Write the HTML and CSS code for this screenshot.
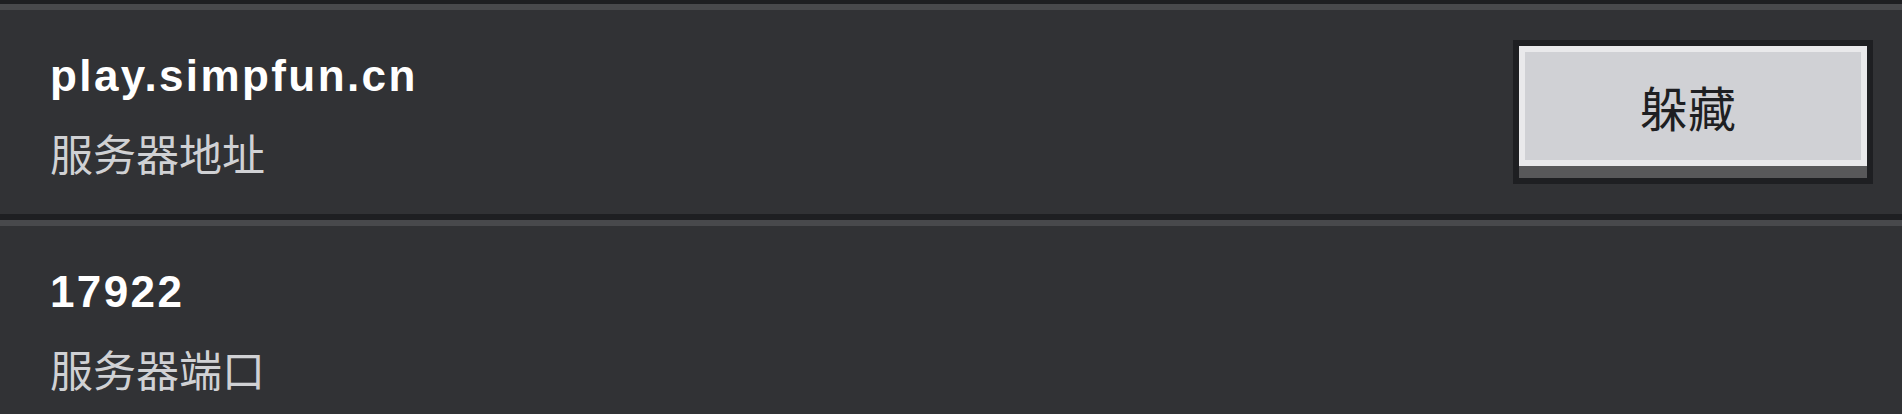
FILE: index.html
```html
<!DOCTYPE html>
<html lang="zh-CN">
<head>
<meta charset="utf-8">
<title>服务器</title>
<link rel="stylesheet" href="styles.css">
</head>
<body>
<div class="list">
  <div class="row">
    <div class="info">
      <div class="title">play.simpfun.cn</div>
      <div class="label">服务器地址</div>
    </div>
    <div class="btn"><div class="btn-face">躲藏</div></div>
  </div>
  <div class="row">
    <div class="info">
      <div class="title">17922</div>
      <div class="label">服务器端口</div>
    </div>
  </div>
</div>
</body>
</html>
```

FILE: styles.css
```css
html, body {
  margin: 0;
  padding: 0;
  background: #313235;
  overflow: hidden;
  height: 414px;
}
.list {
  margin-top: -2px;
  display: flex;
  flex-direction: column;
}
.row {
  border-top: 6px solid #1e1f22;
  box-shadow: inset 0 6px 0 #48494c;
  padding-top: 6px;
  height: 204px;
  flex: none;
  display: flex;
  align-items: center;
  justify-content: space-between;
  padding-left: 50px;
  padding-right: 29px;
  background: #313235;
}
.info {
  display: flex;
  flex-direction: column;
  gap: 29px;
  padding-top: 2px;
}
.title {
  font-family: "Liberation Sans", Arial, sans-serif;
  font-weight: bold;
  font-size: 44px;
  letter-spacing: 2.4px;
  line-height: 48px;
  color: #ffffff;
}
.label {
  font-family: "Noto Sans CJK SC", "Noto Sans", sans-serif;
  font-size: 43px;
  line-height: 46px;
  color: #d0d1d4;
}
.btn {
  width: 348px;
  border: 6px solid #1e1f22;
  background: #58585a;
  padding-bottom: 12px;
}
.btn-face {
  height: 108px;
  border: 6px solid #e9e9eb;
  background: #d0d1d5;
  display: flex;
  align-items: center;
  justify-content: center;
  padding-right: 10px;
  font-family: "Noto Sans CJK SC", sans-serif;
  font-size: 48px;
  color: #1e1f22;
}
```
